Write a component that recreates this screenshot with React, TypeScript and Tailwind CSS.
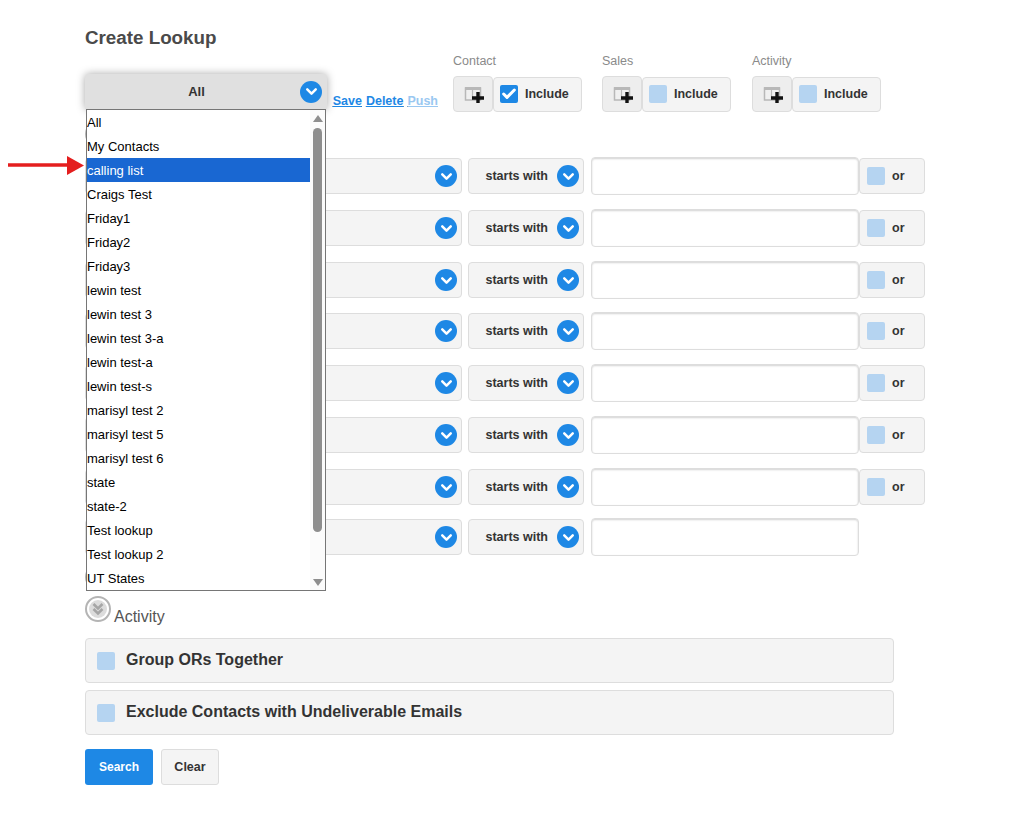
import { Check, ChevronDown } from 'lucide-react';

const lookups = [
  'All',
  'My Contacts',
  'calling list',
  'Craigs Test',
  'Friday1',
  'Friday2',
  'Friday3',
  'lewin test',
  'lewin test 3',
  'lewin test 3-a',
  'lewin test-a',
  'lewin test-s',
  'marisyl test 2',
  'marisyl test 5',
  'marisyl test 6',
  'state',
  'state-2',
  'Test lookup',
  'Test lookup 2',
  'UT States',
];

const rows = [
  { top: 'mt-[11px]', or: true },
  { top: 'mt-[16px]', or: true },
  { top: 'mt-[16px]', or: true },
  { top: 'mt-[15px]', or: true },
  { top: 'mt-[16px]', or: true },
  { top: 'mt-[16px]', or: true },
  { top: 'mt-[16px]', or: true },
  { top: 'mt-[14px]', or: false },
];

function ChevronBadge() {
  return (
    <span className="flex h-[22px] w-[22px] shrink-0 items-center justify-center rounded-full bg-[#1e88e5]">
      <ChevronDown size={17} strokeWidth={3.5} className="text-white" />
    </span>
  );
}

function Tick({ checked = false }: { checked?: boolean }) {
  return (
    <span
      className={`flex h-[18px] w-[18px] shrink-0 items-center justify-center rounded-[2px] ${
        checked ? 'bg-[#1e88e5]' : 'bg-[#b5d4f1]'
      }`}
    >
      {checked && <Check size={16} strokeWidth={4.5} className="text-white" />}
    </span>
  );
}

function RoundToggle() {
  return (
    <span className="flex h-[26px] w-[26px] items-center justify-center rounded-full border-[2px] border-[#b4b4b4] bg-white">
      <span className="flex h-[18px] w-[18px] items-center justify-center rounded-full bg-[#dcdcdc]">
        <svg width="14" height="16" viewBox="0 0 14 16" fill="none" stroke="#a6a6a6" strokeWidth="2.6">
          <path d="M2.5 3l4.5 4.5L11.5 3" />
          <path d="M2.5 8l4.5 4.5L11.5 8" />
        </svg>
      </span>
    </span>
  );
}

function TableIcon() {
  return (
    <svg width="22" height="18" viewBox="0 0 22 18">
      <rect x="3.5" y="3" width="15" height="12" fill="#f0f0f0" stroke="#b8b8b8" strokeWidth="1.5" />
      <rect x="3" y="2" width="16" height="3" fill="#b8b8b8" />
      <path d="M10.5 3v12" stroke="#b8b8b8" strokeWidth="1.2" />
      <path d="M16 7v11M10 13h12" stroke="#111" strokeWidth="3.4" />
    </svg>
  );
}

function IncludeGroup({ label, checked, width }: { label: string; checked?: boolean; width: string }) {
  return (
    <div className={width}>
      <p className="text-[12.5px] leading-[17px] text-[#8a8a8a]">{label}</p>
      <div className="mt-[6px] flex">
        <span className="flex h-[36px] w-[40px] items-center justify-center rounded-[4px] border border-[#dddddd] bg-[#eeeeee]">
          <TableIcon />
        </span>
        <span className="mt-px flex h-[35px] items-center gap-[7px] rounded-[4px] border border-[#dddddd] bg-[#f4f4f4] pb-px pl-[6px] pr-[12.5px] text-[12.5px] font-bold text-[#333333]">
          <Tick checked={checked} />
          Include
        </span>
      </div>
    </div>
  );
}

function FilterRow({ top, or }: { top: string; or: boolean }) {
  return (
    <div className={`flex h-[36px] items-center ${top}`}>
      <div className="flex h-[36px] w-[377px] items-center justify-end rounded-[4px] border border-[#dddddd] bg-[#f4f4f4] pr-[4px]">
        <ChevronBadge />
      </div>
      <div className="ml-[6px] flex h-[36px] w-[116px] items-center justify-end gap-[9px] rounded-[4px] border border-[#dddddd] bg-[#f4f4f4] pr-[4px] text-[12.5px] font-bold text-[#333333]">
        starts with
        <ChevronBadge />
      </div>
      <input
        type="text"
        className="ml-[7px] h-[38px] w-[268px] rounded-[4px] border border-[#dddddd] bg-white shadow-[inset_0_1px_2px_rgba(0,0,0,0.18)] outline-none"
      />
      {or && (
        <span className="flex h-[36px] w-[66px] items-center gap-[7px] rounded-[4px] border border-[#dddddd] bg-[#f4f4f4] pl-[7px] text-[12.5px] font-bold text-[#333333]">
          <Tick />
          or
        </span>
      )}
    </div>
  );
}

function OptionBar({ label, top }: { label: string; top: string }) {
  return (
    <div
      className={`flex h-[45px] w-[809px] items-center gap-[11px] rounded-[4px] border border-[#dddddd] bg-[#f4f4f4] pl-[11px] text-[16px] font-bold text-[#333333] ${top}`}
    >
      <Tick />
      <span className="-mt-[2px]">{label}</span>
    </div>
  );
}

export default function App() {
  return (
    <div className="relative min-h-[833px] bg-white pl-[85px] pt-[27px] font-['Liberation_Sans',Arial,sans-serif]">
      <h1 className="text-[18.8px] font-bold leading-[22px] text-[#4a4a4a]">Create Lookup</h1>

      {/* top bar */}
      <div className="mt-[4px] flex h-[60px]">
        <div className="flex w-[368px] justify-end pt-[40px]">
          <div className="mr-[15px] flex gap-[4px] text-[12.5px] font-bold leading-[16px] underline">
            <a className="text-[#1e88e5]">Save</a>
            <a className="text-[#1e88e5]">Delete</a>
            <a className="text-[#9ac8f1]">Push</a>
          </div>
        </div>
        <div className="flex">
          <IncludeGroup label="Contact" checked width="w-[149px]" />
          <IncludeGroup label="Sales" width="w-[150px]" />
          <IncludeGroup label="Activity" width="w-[130px]" />
        </div>
      </div>

      {/* contact section */}
      <div className="mt-[8px] h-[26px]">
        <RoundToggle />
      </div>
      {rows.map((row, i) => (
        <FilterRow key={i} top={row.top} or={row.or} />
      ))}

      {/* sales + activity */}
      <div className="mt-[9px] h-[26px]">
        <RoundToggle />
      </div>
      <div className="mt-[6px] flex h-[26px]">
        <RoundToggle />
        <span className="ml-[3px] mt-[11px] text-[16px] leading-[20px] text-[#555555]">Activity</span>
      </div>

      <OptionBar label="Group ORs Together" top="mt-[16px]" />
      <OptionBar label="Exclude Contacts with Undeliverable Emails" top="mt-[7px]" />

      <div className="mt-[14px] flex gap-[8px]">
        <button
          type="button"
          className="h-[36px] w-[68px] rounded-[3px] bg-[#1e88e5] text-[12px] font-bold text-white"
        >
          Search
        </button>
        <button
          type="button"
          className="h-[36px] w-[58px] rounded-[3px] border border-[#dddddd] bg-[#f4f4f4] text-[12.5px] font-bold text-[#333333]"
        >
          Clear
        </button>
      </div>

      {/* open lookup dropdown */}
      <div className="absolute left-[85px] top-[74px] w-[242px]">
        <div className="flex h-[35px] items-center rounded-t-[4px] bg-[#e0e0e0] pr-[5px] text-[13px] font-bold text-[#333333] shadow-[0_0_8px_rgba(0,0,0,0.35)]">
          <span className="flex-1 pl-[8px] text-center">All</span>
          <ChevronBadge />
        </div>
        <div className="relative ml-px h-[482px] w-[240px] border border-[#767676] bg-white text-[13px] leading-[26px] text-black">
          {lookups.map((name) => (
            <div
              key={name}
              className={`h-[24px] w-[223px] ${name === 'calling list' ? 'bg-[#1967d2] text-white' : ''}`}
            >
              {name}
            </div>
          ))}
          <div className="absolute bottom-0 right-0 top-0 flex w-[15px] flex-col items-center bg-[#fbfbfb]">
            <svg className="mt-[5px] shrink-0" width="10" height="7" viewBox="0 0 10 7">
              <path d="M5 0l5 7H0z" fill="#8e8e8e" />
            </svg>
            <div className="mt-[6px] h-[404px] w-[9px] shrink-0 rounded-full bg-[#8e8e8e]" />
            <svg className="mt-[47px] shrink-0" width="10" height="7" viewBox="0 0 10 7">
              <path d="M5 7L0 0h10z" fill="#8e8e8e" />
            </svg>
          </div>
        </div>
      </div>

      {/* annotation arrow */}
      <svg className="absolute left-[8px] top-[155px]" width="78" height="22" viewBox="0 0 78 22">
        <path d="M0 10h60" stroke="#e41e1e" strokeWidth="3.5" />
        <path d="M59 1l17 9.5-17 9.5z" fill="#e41e1e" />
      </svg>
    </div>
  );
}
